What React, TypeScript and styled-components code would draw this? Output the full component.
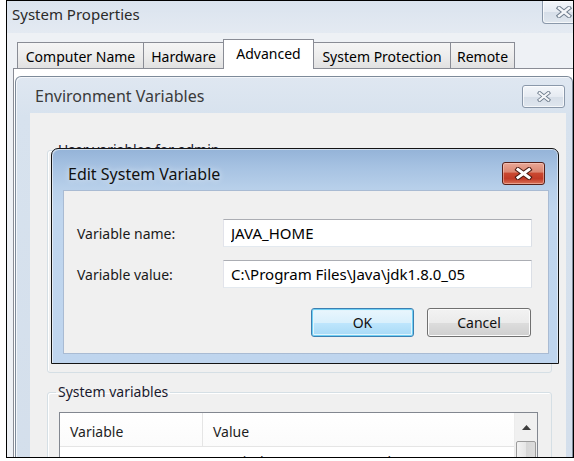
import React from "react";
import styled, { createGlobalStyle, css } from "styled-components";

const GlobalStyle = createGlobalStyle`
  html, body { margin: 0; padding: 0; background: #ffffff; }
  body { font-family: "Noto Sans", "Open Sans", "DejaVu Sans", sans-serif; }
  * { box-sizing: border-box; }
`;

const Page = styled.div`
  width: 574px;
  height: 461px;
  padding-left: 6px;
  background: #ffffff;
`;

const Frame = styled.div`
  position: relative;
  width: 568px;
  height: 458px;
  border: 1px solid #000;
  overflow: hidden;
  background: #eef1f5;
  display: flex;
  flex-direction: column;
`;

/* ---------- System Properties window ---------- */

const SysTitleBar = styled.div`
  height: 32px;
  flex: none;
  display: flex;
  justify-content: space-between;
  align-items: flex-start;
  background: linear-gradient(#dae3ee, #e4eaf2);
`;

const SysTitle = styled.div`
  padding: 3px 0 0 5px;
  font-size: 15px;
  line-height: 20px;
  color: #2a2a2a;
`;

const glassButton = css`
  width: 43px;
  height: 23px;
  display: flex;
  align-items: center;
  justify-content: center;
  border: 1px solid #8a98aa;
  background: linear-gradient(#f3f6fa 0%, #e6ebf2 50%, #d6dee8 51%, #dfe6ee 100%);
  box-shadow: inset 0 0 0 1px rgba(255, 255, 255, 0.7);
`;

const SysClose = styled.div`
  ${glassButton};
  margin-right: -12px;
  border-top: none;
  border-radius: 0 0 4px 4px;
`;

const TabRow = styled.div`
  height: 35px;
  flex: none;
  display: flex;
  align-items: flex-end;
  padding-left: 10px;
  position: relative;
  z-index: 1;
`;

const Tab = styled.div<{ $w: number; $active?: boolean }>`
  width: ${(p) => p.$w}px;
  height: 26px;
  margin-left: -1px;
  display: flex;
  align-items: center;
  justify-content: center;
  padding-top: 2px;
  border: 1px solid #898c95;
  border-bottom: none;
  font-size: 14px;
  color: #000;
  background: linear-gradient(#f5f5f5 0%, #ededed 50%, #e1e1e1 100%);
  &:first-child { margin-left: 0; }
  ${(p) =>
    p.$active &&
    css`
      height: 30px;
      margin-bottom: -1px;
      padding-top: 0;
      padding-bottom: 2px;
      background: #ffffff;
      position: relative;
      z-index: 2;
    `}
`;

const TabPanel = styled.div`
  flex: 1;
  margin-left: 6px;
  margin-right: -10px;
  border-top: 1px solid #898c95;
  border-left: 1px solid #898c95;
  background: #ffffff;
  padding: 7px 0 0 1px;
  display: flex;
  flex-direction: column;
`;

/* ---------- Environment Variables window ---------- */

const EnvWindow = styled.div`
  width: 558px;
  flex: 1;
  display: flex;
  flex-direction: column;
  border: 1px solid #7d8a99;
  border-bottom: none;
  border-radius: 6px 6px 0 0;
  background: linear-gradient(#dfe7f1, #d7e2ee 40px, #d3deeb);
  box-shadow: inset 1px 1px 0 #f3f6fa;
`;

const EnvTitleBar = styled.div`
  height: 36px;
  flex: none;
  display: flex;
  align-items: center;
  justify-content: space-between;
  padding: 2px 7px 0 19px;
`;

const EnvTitle = styled.div`
  font-size: 16px;
  line-height: 20px;
  color: #3a3a3a;
`;

const EnvClose = styled.div`
  ${glassButton};
  border-radius: 3px;
`;

const EnvBody = styled.div`
  flex: 1;
  display: flex;
  padding: 0 6px 0 14px;
`;

const EnvClient = styled.div`
  flex: 1;
  background: #f0f0f0;
  padding: 27px 14px 0 17px;
  display: flex;
  flex-direction: column;
  gap: 9px;
`;

const GroupBox = styled.fieldset<{ $h: number }>`
  margin: 0;
  min-width: 0;
  height: ${(p) => p.$h}px;
  flex: none;
  padding: 10px 12px 0 11px;
  border: 1px solid #d5dfe5;
  border-radius: 3px;
  box-shadow: inset 1px 1px 0 #ffffff;
`;

const Legend = styled.legend`
  margin-left: -3px;
  padding: 0 2px;
  font-size: 14px;
  line-height: 20px;
  color: #1a1a2e;
`;

const ListView = styled.div`
  width: 479px;
  height: 200px;
  border: 1px solid #828790;
  background: #ffffff;
  display: flex;
`;

const ListBody = styled.div`
  flex: 1;
  display: flex;
  flex-direction: column;
`;

const ListHeader = styled.div`
  height: 34px;
  display: grid;
  grid-template-columns: 142px 1fr;
  border-bottom: 1px solid #e5e5e5;
  background: linear-gradient(#ffffff, #fbfbfb);
`;

const HeaderCell = styled.div`
  padding: 3px 0 0 10px;
  display: flex;
  align-items: center;
  font-size: 14px;
  color: #1e1e1e;
  & + & { border-left: 1px solid #e5e5e5; }
`;

const ListRow = styled.div`
  height: 26px;
  padding-top: 4px;
  display: grid;
  grid-template-columns: 142px 1fr;
`;

const RowCell = styled.div`
  padding-left: 10px;
  font-size: 14px;
  line-height: 22px;
  color: #1e1e1e;
  white-space: nowrap;
`;

const ScrollBar = styled.div`
  width: 23px;
  display: flex;
  flex-direction: column;
  background: #f0f0f0;
  border-left: 1px solid #ececec;
`;

const ScrollArrow = styled.div`
  height: 28px;
  display: flex;
  align-items: center;
  justify-content: center;
`;

const ScrollThumb = styled.div`
  flex: 1;
  margin: 0 1px;
  border: 1px solid #9b9b9b;
  border-radius: 2px;
  background: linear-gradient(90deg, #f3f3f3, #e6e6e6 50%, #d6d6d6 51%, #dcdcdc);
`;

/* ---------- Edit System Variable dialog ---------- */

const EditDialog = styled.div`
  position: absolute;
  left: 44px;
  top: 147px;
  width: 508px;
  height: 216px;
  z-index: 5;
  display: flex;
  flex-direction: column;
  padding: 0 9px 9px 11px;
  border: 1px solid #141414;
  border-radius: 7px 7px 0 0;
  background: linear-gradient(#94b3d8 0px, #a6c2e2 18px, #b8d0ea 40px, #c0d6ee 60px, #bfd5ee 100%);
  box-shadow: inset 1px 1px 0 rgba(255, 255, 255, 0.55), inset -1px 0 0 rgba(255, 255, 255, 0.45);
`;

const EditTitleBar = styled.div`
  height: 41px;
  flex: none;
  display: flex;
  align-items: center;
  justify-content: space-between;
  padding: 8px 4px 0 5px;
`;

const EditTitle = styled.div`
  font-size: 16px;
  line-height: 20px;
  color: #111;
  text-shadow: 0 0 6px rgba(255, 255, 255, 0.8);
`;

const RedClose = styled.div`
  width: 43px;
  height: 23px;
  display: flex;
  align-items: center;
  justify-content: center;
  border: 1px solid #56211a;
  border-radius: 3px;
  background: linear-gradient(#e8a796 0%, #dc8873 42%, #c9472f 50%, #c13a26 75%, #d9725a 100%);
  box-shadow: inset 0 0 0 1px rgba(255, 220, 210, 0.45);
`;

const EditClient = styled.div`
  flex: 1;
  background: #f0f0f0;
  border: 1px solid #a9bbd3;
  padding: 28px 15px 16px 13px;
  display: flex;
  flex-direction: column;
  gap: 13px;
`;

const FieldRow = styled.div`
  height: 28px;
  display: flex;
  align-items: center;
`;

const FieldLabel = styled.label`
  width: 146px;
  flex: none;
  font-size: 14px;
  color: #1a1a1a;
`;

const TextInput = styled.input`
  width: 309px;
  height: 28px;
  padding: 0 7px;
  border: 1px solid;
  border-color: #abadb3 #dbdfe6 #e3e9ef #e2e3ea;
  background: #ffffff;
  font-family: inherit;
  font-size: 15px;
  color: #000;
  outline: none;
`;

const ButtonRow = styled.div`
  margin-top: 7px;
  padding-right: 2px;
  display: flex;
  justify-content: flex-end;
  gap: 13px;
`;

const PushButton = styled.button<{ $w: number; $default?: boolean }>`
  width: ${(p) => p.$w}px;
  height: 29px;
  padding: 0;
  border-radius: 3px;
  font-family: inherit;
  font-size: 14px;
  color: #111;
  border: 1px solid #707070;
  background: linear-gradient(#f2f2f2 0%, #ebebeb 50%, #dddddd 51%, #cfcfcf 100%);
  box-shadow: inset 0 0 0 1px #fbfbfb;
  ${(p) =>
    p.$default &&
    css`
      border-color: #3c7fb1;
      background: linear-gradient(#eaf6fd 0%, #d9f0fc 50%, #bee6fd 51%, #a7d9f5 100%);
      box-shadow: inset 0 0 0 1px #6fd0f5, inset 0 0 0 2px #e2f4fc;
    `}
`;

/* ---------- glyphs ---------- */

const GlassX = ({ size = 14 }: { size?: number }) => (
  <svg width={size} height={Math.round(size * 0.75)} viewBox="0 0 16 12">
    <path d="M3 2 L13 10 M13 2 L3 10" stroke="#6f7d8d" strokeWidth="4.4" strokeLinecap="square" fill="none" />
    <path d="M3 2 L13 10 M13 2 L3 10" stroke="#f4f6f9" strokeWidth="2.4" strokeLinecap="square" fill="none" />
  </svg>
);

const RedX = () => (
  <svg width="19" height="13" viewBox="0 0 19 13">
    <path d="M4 2.5 L15 10.5 M15 2.5 L4 10.5" stroke="#4a1a12" strokeWidth="5" strokeLinecap="square" fill="none" />
    <path d="M4 2.5 L15 10.5 M15 2.5 L4 10.5" stroke="#ffffff" strokeWidth="3" strokeLinecap="square" fill="none" />
  </svg>
);

const UpArrow = () => (
  <svg width="9" height="5" viewBox="0 0 9 5">
    <path d="M0 5 L4.5 0 L9 5 Z" fill="#3c3c3c" />
  </svg>
);

const tabs = [
  { label: "Computer Name", w: 127 },
  { label: "Hardware", w: 81 },
  { label: "Advanced", w: 91, active: true },
  { label: "System Protection", w: 138 },
  { label: "Remote", w: 65 },
];

export default function App() {
  return (
    <Page>
      <GlobalStyle />
      <Frame>
        <SysTitleBar>
          <SysTitle>System Properties</SysTitle>
          <SysClose>
            <GlassX size={16} />
          </SysClose>
        </SysTitleBar>
        <TabRow>
          {tabs.map((t) => (
            <Tab key={t.label} $w={t.w} $active={t.active}>
              {t.label}
            </Tab>
          ))}
        </TabRow>
        <TabPanel>
          <EnvWindow>
            <EnvTitleBar>
              <EnvTitle>Environment Variables</EnvTitle>
              <EnvClose>
                <GlassX />
              </EnvClose>
            </EnvTitleBar>
            <EnvBody>
              <EnvClient>
                <GroupBox $h={233}>
                  <Legend>User variables for admin</Legend>
                </GroupBox>
                <GroupBox $h={160}>
                  <Legend>System variables</Legend>
                  <ListView>
                    <ListBody>
                      <ListHeader>
                        <HeaderCell>Variable</HeaderCell>
                        <HeaderCell>Value</HeaderCell>
                      </ListHeader>
                      <ListRow>
                        <RowCell>ComSpec</RowCell>
                        <RowCell>C:\Windows\system32\cmd.exe</RowCell>
                      </ListRow>
                    </ListBody>
                    <ScrollBar>
                      <ScrollArrow>
                        <UpArrow />
                      </ScrollArrow>
                      <ScrollThumb />
                    </ScrollBar>
                  </ListView>
                </GroupBox>
              </EnvClient>
            </EnvBody>
          </EnvWindow>
        </TabPanel>

        <EditDialog>
          <EditTitleBar>
            <EditTitle>Edit System Variable</EditTitle>
            <RedClose>
              <RedX />
            </RedClose>
          </EditTitleBar>
          <EditClient>
            <FieldRow>
              <FieldLabel>Variable name:</FieldLabel>
              <TextInput readOnly value="JAVA_HOME" />
            </FieldRow>
            <FieldRow>
              <FieldLabel>Variable value:</FieldLabel>
              <TextInput readOnly value={"C:\\Program Files\\Java\\jdk1.8.0_05"} />
            </FieldRow>
            <ButtonRow>
              <PushButton $w={103} $default>
                OK
              </PushButton>
              <PushButton $w={104}>Cancel</PushButton>
            </ButtonRow>
          </EditClient>
        </EditDialog>
      </Frame>
    </Page>
  );
}
